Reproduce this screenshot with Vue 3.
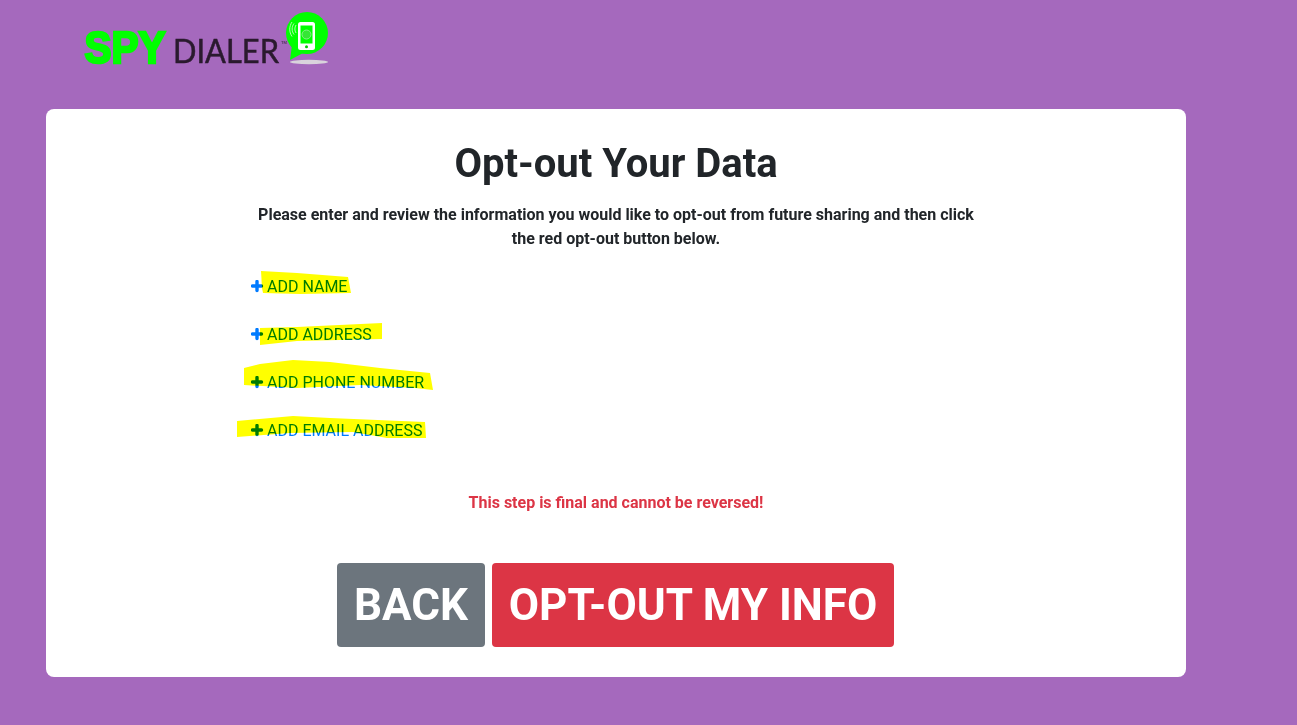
<script setup>
const rows = [
  { label: 'ADD NAME' },
  { label: 'ADD ADDRESS' },
  { label: 'ADD PHONE NUMBER' },
  { label: 'ADD EMAIL ADDRESS' }
]
const marks = [
  '31,9 67,11 118,15 121,31 70,32 33,31 32,26',
  '30,66 67,65 152,61 152,77 67,79 30,83',
  '14,106 30,102 63,98 100,100 150,106 200,111 203,128 185,126 130,123 67,126 14,123',
  '7,159 63,154 100,156 195,160 196,176 157,176 123,170 60,171 7,175'
]
</script>

<template>
  <div class="page">
    <header class="top">
      <svg class="logo" width="250" height="60" viewBox="0 0 250 60" aria-label="Spy Dialer">
        <text class="spy" x="0.500" y="48" textLength="81" lengthAdjust="spacingAndGlyphs">SPY</text>
        <text class="dialer" x="89" y="48" textLength="106" lengthAdjust="spacingAndGlyphs">DIALER</text>
        <text class="tm" x="197" y="29">TM</text>
        <ellipse cx="225" cy="47" rx="19" ry="2.2" fill="#d9d3dc" />
        <circle cx="223" cy="18" r="21" fill="#00ff00" />
        <path d="M208 30L206 45L219 38z" fill="#00ff00" />
        <rect x="214" y="7" width="17" height="28" rx="2.500" fill="#fff" />
        <rect x="216.500" y="10.500" width="12" height="18" fill="#00ff00" />
        <circle cx="222.500" cy="19.500" r="4.500" fill="#35e635" stroke="#86ec86" />
        <circle cx="222.500" cy="31.800" r="1.500" fill="#00c800" />
        <path d="M212 10c-1.500 2.500-1.500 5.500 0 8M210 8.500c-2.500 3.500-2.500 7.500 0 11M208 7c-3 4.500-3 10 0 14.500" fill="none" stroke="#d8ffd8" stroke-width=".8" />
      </svg>
    </header>

    <main class="card">
      <h1 class="title">Opt-out Your Data</h1>
      <p class="intro">
        Please enter and review the information you would like to opt-out from future sharing and then click the red opt-out button below.
      </p>

      <div class="list">
        <a v-for="row in rows" :key="row.label" class="row">
          <svg class="plus" width="13" height="13" viewBox="0 0 13 13"><path d="M6 1.500v9M1.500 6h9" stroke="#007bff" stroke-width="3.400" stroke-linecap="round" /></svg>
          <span>{{ row.label }}</span>
        </a>
        <svg class="marker" width="240" height="190" viewBox="0 0 240 190">
          <polygon v-for="m in marks" :key="m" :points="m" fill="#ffff00" />
        </svg>
      </div>

      <p class="warning">This step is final and cannot be reversed!</p>

      <div class="actions">
        <button class="btn grey">BACK</button>
        <button class="btn red">OPT-OUT MY INFO</button>
      </div>
    </main>
  </div>
</template>

<style scoped>
.page {
  width: 1297px;
  height: 725px;
  background: #a569bd;
  font-family: Roboto, "Liberation Sans", sans-serif;
  color: #212529;
  overflow: hidden;
}
.top {
  height: 109px;
  padding: 15px 0 0 84px;
  box-sizing: border-box;
}
.logo {
  display: block;
  overflow: visible;
}
.spy {
  font-family: "Liberation Sans", sans-serif;
  font-weight: 700;
  font-size: 45px;
  fill: #00ff00;
  stroke: #00ff00;
  stroke-width: 2.6px;
}
.dialer {
  font-family: Lato, sans-serif;
  font-size: 32px;
  fill: #2a1a2e;
  stroke: #2a1a2e;
  stroke-width: .5px;
}
.tm {
  font-family: "Liberation Sans", sans-serif;
  font-size: 4px;
  fill: #2a1a2e;
}
.card {
  width: 1140px;
  height: 568px;
  margin-left: 46px;
  background: #fff;
  border-radius: 8px;
  display: flex;
  flex-direction: column;
  align-items: center;
  box-sizing: border-box;
  padding-top: 31px;
}
.title {
  margin: 0;
  font-size: 40px;
  line-height: 48px;
  font-weight: 700;
}
.intro {
  width: 732px;
  margin: 15px 0 0;
  font-size: 16px;
  line-height: 24px;
  font-weight: 700;
  text-align: center;
}
.list {
  position: relative;
  width: 732px;
  margin-top: 23px;
  box-sizing: border-box;
  padding-left: 1px;
  display: flex;
  flex-direction: column;
  gap: 24px;
}
.row {
  display: flex;
  align-items: center;
  gap: 3px;
  height: 24px;
  font-size: 16px;
  color: #007bff;
}
.plus {
  flex: none;
}
.marker {
  position: absolute;
  left: -20px;
  top: -12px;
  mix-blend-mode: multiply;
  pointer-events: none;
}
.warning {
  margin: 49px 0 0;
  font-size: 16px;
  line-height: 24px;
  font-weight: 700;
  color: #dc3545;
}
.actions {
  display: flex;
  gap: 7px;
  margin: 48px 1px 0 0;
}
.btn {
  height: 84px;
  border: 0;
  border-radius: 4px;
  padding: 0;
  font-family: inherit;
  font-size: 44px;
  font-weight: 700;
  color: #fff;
}
.grey {
  background: #6c757d;
  width: 148px;
}
.red {
  background: #dc3545;
  width: 402px;
}
</style>
